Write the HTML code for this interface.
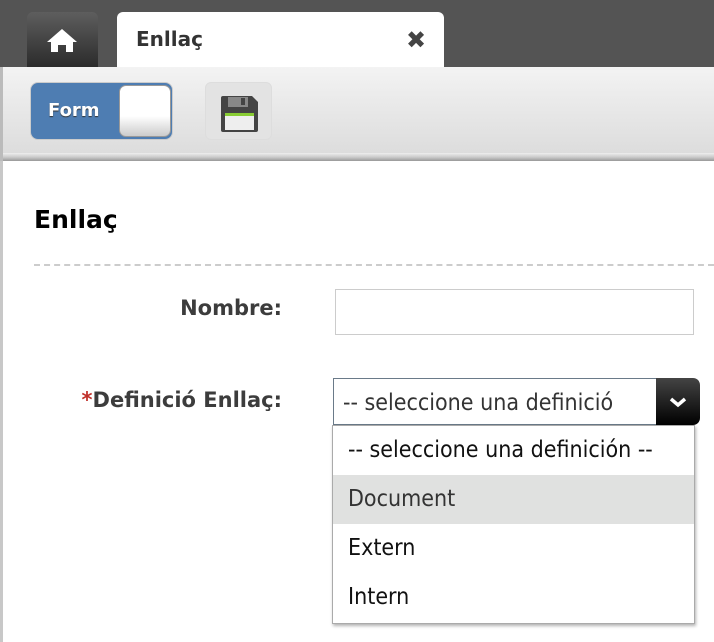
<!DOCTYPE html>
<html><head><meta charset="utf-8"><style>
*{box-sizing:border-box;margin:0;padding:0}
body{width:714px;height:642px;overflow:hidden;background:#fff;font-family:"DejaVu Sans","Liberation Sans",sans-serif;position:relative}
.top{position:absolute;left:0;top:0;width:714px;height:67px;background:#545454}
.home{position:absolute;left:27px;top:12px;width:71px;height:56px;border-radius:6px 6px 0 0;background:linear-gradient(#5e5e5e,#2a2a2a)}
.tab{position:absolute;left:117px;top:12px;width:327px;height:56px;background:#fff;border-radius:6px 6px 0 0}
.tab span{position:absolute;left:19px;top:15px;font-weight:bold;font-size:20px;color:#333}
.tab .x{position:absolute;left:289px;top:14px;font-size:24px;font-weight:bold;color:#444}
.tb{position:absolute;left:0;top:67px;width:714px;height:88px;background:linear-gradient(#f3f3f3,#dcdcdc);border-left:3px solid #bbb}
.tbb{position:absolute;left:0;top:153px;width:714px;height:8px;background:linear-gradient(#eee,#ccc 50%,#999);border-left:3px solid #bbb}
.left{position:absolute;left:0;top:161px;width:3px;height:481px;background:#c8c8c8}
.tog{position:absolute;left:30px;top:82px;width:143px;height:58px;border-radius:8px;background:#4e7db2;border:1px solid #ccc}
.tog span{position:absolute;left:17px;top:17px;color:#fff;font-weight:bold;font-size:18px;text-shadow:0 1px 1px #333}
.knob{position:absolute;left:88px;top:2px;width:52px;height:52px;border-radius:7px;background:linear-gradient(#fff 60%,#ccc);border:1px solid #999}
.save{position:absolute;left:205px;top:82px;width:67px;height:58px;border-radius:6px;background:#e3e3e3;border:1px solid #ddd}
h1{position:absolute;left:34px;top:205px;font-size:25px;font-weight:bold;color:#000}
.dash{position:absolute;left:34px;top:264px;width:680px;border-top:2px dashed #ccc}
.lbl{position:absolute;right:432px;font-weight:bold;font-size:21px;color:#3c3c3c}
.inp{position:absolute;left:335px;top:289px;width:359px;height:46px;border:1px solid #ccc}
.sel{position:absolute;left:333px;top:378px;width:323px;height:47px;border:1px solid #6a7a89;border-right:none;font-size:23px;color:#333;padding:11px 0 0 9px;overflow:hidden;white-space:nowrap;font-family:"DejaVu Sans Condensed","DejaVu Sans",sans-serif}
.sel div{width:272px;overflow:hidden}
.arr{position:absolute;left:656px;top:378px;width:44px;height:47px;border-radius:0 7px 7px 0;background:linear-gradient(#444,#000)}
.dd{position:absolute;left:332px;top:425px;width:363px;height:199px;background:#fff;border:1px solid #aaa;box-shadow:1px 2px 3px rgba(0,0,0,.3)}
.it{height:49px;font-size:23px;padding:11px 0 0 15px;color:#111;font-family:"DejaVu Sans Condensed","DejaVu Sans",sans-serif}
.it.h{background:#e0e1e0;color:#333}
</style></head><body>
<div class="top"></div>
<div class="home"><svg width="71" height="56" viewBox="0 0 71 56"><path d="M20 30 L35 17 L50 30 L46 30 L46 40 L39 40 L39 33 L31 33 L31 40 L24 40 L24 30 Z" fill="#fff"/></svg></div>
<div class="tab"><span>Enllaç</span><div class="x">✖</div></div>
<div class="tb"></div>
<div class="tbb"></div>
<div class="left"></div>
<div class="tog"><span>Form</span><div class="knob"></div></div>
<div class="save"><svg width="67" height="58" viewBox="0 0 67 58"><path d="M17 13 H46 L52 19 V47 Q52 49 50 49 H17 Q15 49 15 47 V15 Q15 13 17 13Z" fill="#444"/><rect x="22" y="14" width="20" height="10" fill="#888"/><rect x="35" y="15" width="4" height="7" fill="#444"/><rect x="19" y="30" width="29" height="17" fill="#eee"/><rect x="19" y="30" width="29" height="3" fill="#8c3"/></svg></div>
<h1>Enllaç</h1>
<div class="dash"></div>
<div class="lbl" style="top:296px">Nombre:</div>
<div class="inp"></div>
<div class="lbl" style="top:388px"><span style="color:#c0302a">*</span>Definició Enllaç:</div>
<div class="sel"><div>-- seleccione una definición --</div></div>
<div class="arr"><svg width="44" height="47"><path d="M15 21 L22 27 L29 21" stroke="#fff" stroke-width="3.5" fill="none"/></svg></div>
<div class="dd">
<div class="it">-- seleccione una definición --</div>
<div class="it h">Document</div>
<div class="it">Extern</div>
<div class="it">Intern</div>
</div>
</body></html>
